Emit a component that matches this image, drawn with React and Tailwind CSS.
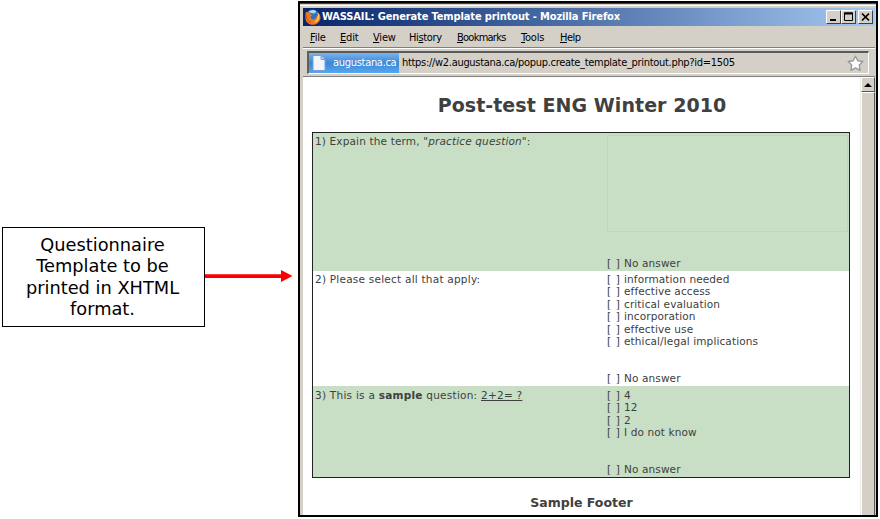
const menuItems = [
  { before: '', key: 'F', after: 'ile', style: 'w-[30px]' },
  { before: '', key: 'E', after: 'dit', style: 'w-[33px]' },
  { before: '', key: 'V', after: 'iew', style: 'w-[36px]' },
  { before: 'Hi', key: 's', after: 'tory', style: 'w-[48px] tracking-[-0.35px]' },
  { before: '', key: 'B', after: 'ookmarks', style: 'w-[64px] tracking-[-0.75px]' },
  { before: '', key: 'T', after: 'ools', style: 'w-[39px]' },
  { before: '', key: 'H', after: 'elp', style: 'w-[30px] tracking-[-0.5px]' },
];

const UI = "font-['DejaVu_Sans_Condensed','DejaVu_Sans',sans-serif] [font-stretch:condensed]";

function FirefoxIcon() {
  return (
    <svg width="16" height="16" viewBox="0 0 16 16" className="block shrink-0">
      <circle cx="7.500" cy="7" r="6.500" fill="#2f6fc4" />
      <path d="M3.500 3C5 .8 9 .3 11.500 2.200L9.500 4.500 6 4z" fill="#9fdcf8" />
      <path d="M1 2.500C1.800 3.400 2.500 3.600 3.200 3.300 4 2.900 5 3.200 5.500 3.800L5 5.200l2.500.9-2 1.600c0 2 1.700 3 3.500 2.600 1.700-.4 2.700-1.700 2.500-3.500l1.200.5c.4-1.500 0-3-.9-4.300 2.600 1.200 4 3.600 3.600 6.500-.6 3.600-3.800 6.300-7.500 6.300C3.500 15.800 .3 12.500.3 8.500c0-2.200.2-4.500.7-6z" fill="#ec7a1c" />
      <path d="M12.700 3.500c1.700 2 2 4.600 1 6.700-1.100 2.300-3.200 3.300-5.600 3.200 3.500-1.100 5.400-4.500 4.600-9.900z" fill="#ffd655" />
      <path d="M.9 5.500c.2 4 2 6.500 5.100 7.900" stroke="#c8451a" strokeWidth="1" fill="none" />
    </svg>
  );
}

function PageIcon() {
  return (
    <svg width="14" height="16" viewBox="0 0 14 16" className="block shrink-0">
      <path d="M1 .5h8l4 4v11H1z" fill="#f1f6fe" stroke="#7f9dcc" />
      <path d="M9 .5v4h4z" fill="#c9daf2" stroke="#7f9dcc" />
    </svg>
  );
}

function StarIcon() {
  return (
    <svg width="17" height="17" viewBox="0 0 17 17" className="block shrink-0">
      <path d="M8.500 1.200l2.300 4.500 5 .8-3.500 3.600.8 5.200-4.600-2.400-4.600 2.400.8-5.200L1.200 6.500l5-.8z" fill="#fff" stroke="#999" strokeWidth="1.400" strokeLinejoin="round" />
    </svg>
  );
}

function CaptionButton({ children, spaced }) {
  return (
    <div className={`flex h-[14px] w-[15px] shrink-0 items-center justify-center border border-t-white border-l-white border-r-[#404040] border-b-[#404040] bg-[#d4d0c8] ${spaced ? 'ml-[2px]' : ''}`}>
      <svg width="13" height="12" viewBox="0 0 13 12" className="block shrink-0">{children}</svg>
    </div>
  );
}

function TitleBar() {
  return (
    <div className="flex h-[18px] items-center bg-linear-to-r from-[#0a246a] to-[#a6caf0] pl-[2px] pr-[2px]">
      <FirefoxIcon />
      <span className={`ml-[1px] whitespace-nowrap text-[11px] leading-[16px] font-bold tracking-[-0.13px] text-white ${UI}`}>
        WASSAIL: Generate Template printout - Mozilla Firefox
      </span>
      <div className="ml-auto flex">
        <CaptionButton><path d="M3 8h6v2H3z" fill="#000" /></CaptionButton>
        <CaptionButton>
          <path d="M2.500 2h8v7.500h-8z" fill="none" stroke="#000" />
          <path d="M2 1.500h9v2H2z" fill="#000" />
        </CaptionButton>
        <CaptionButton spaced><path d="M3 2.500l7 7M10 2.500l-7 7" stroke="#000" strokeWidth="1.700" /></CaptionButton>
      </div>
    </div>
  );
}

function MenuBar() {
  return (
    <div className={`flex h-[22px] border-b border-[#808080] pl-[7px] text-[11px] leading-[23px] tracking-[-0.2px] text-black ${UI}`}>
      {menuItems.map((m) => (
        <div key={m.key} className={`shrink-0 whitespace-nowrap ${m.style}`}>
          {m.before}
          <span className="underline underline-offset-1">{m.key}</span>
          {m.after}
        </div>
      ))}
    </div>
  );
}

function AddressBar() {
  return (
    <div className="h-[29px] border-t border-b border-t-white border-b-[#808080] pt-[2px] pl-[4px] pr-[6px]">
      <div className={`flex h-[23px] items-center border-t-2 border-l-2 border-r border-b border-t-[#5a5a5a] border-l-[#606060] border-r-white border-b-white text-[11px] ${UI}`}>
        <div className="flex h-full w-[90px] items-center bg-linear-to-b from-[#77b5ef] via-[#3b87d7] to-[#55a8ee] pl-[3px] text-white">
          <PageIcon />
          <span className="ml-[7px] whitespace-nowrap tracking-[-0.3px]">augustana.ca</span>
        </div>
        <span className="ml-[3px] whitespace-nowrap tracking-[-0.305px] text-black">https://w2.augustana.ca/popup.create_template_printout.php?id=1505</span>
        <div className="mr-[4px] ml-auto"><StarIcon /></div>
      </div>
    </div>
  );
}

function Choice({ children }) {
  return (
    <div className="flex h-[12.4px] tracking-[0.12px] whitespace-nowrap">
      <span className="w-[17px] tracking-[0.700px]">[ ]</span>
      <span>{children}</span>
    </div>
  );
}

function Question({ prompt, choices, box, className }) {
  return (
    <div className={`flex ${className}`}>
      <div className="w-[292px] shrink-0 pl-[2px] whitespace-nowrap">{prompt}</div>
      <div className="flex flex-1 flex-col pb-[3px] pl-[2px]">
        {box && <div className="mt-[1px] h-[97px] w-[241px] border border-[#cbcccb]" />}
        {choices.map((c) => <Choice key={c}>{c}</Choice>)}
        <div className="mt-auto"><Choice>No answer</Choice></div>
      </div>
    </div>
  );
}

function Scrollbar() {
  return (
    <div className="flex w-[15px] shrink-0 flex-col border-l border-[#eeece8] bg-[#d4d0c8]">
      <div className="flex h-[15px] items-center justify-center border border-t-white border-l-white border-r-[#555] border-b-[#555]">
        <svg width="8" height="4" viewBox="0 0 8 4" className="block"><path d="M4 0l4 4H0z" fill="#000" /></svg>
      </div>
      <div className="flex-1 border-t border-r border-l border-t-white border-r-[#555] border-l-white" />
    </div>
  );
}

export default function App() {
  return (
    <div className="flex h-[519px] w-[880px] overflow-hidden bg-white pt-[1px] font-['DejaVu_Sans',sans-serif]">
      <div className="flex w-[298px] shrink-0 items-start pt-[226px] pl-[2px]">
        <div className="h-[100px] w-[203px] shrink-0 border border-black pt-[6px] pr-[2px] text-center text-[17.800px] leading-[21.300px] text-black">
          <div>Questionnaire</div>
          <div>Template to be</div>
          <div>printed in XHTML</div>
          <div>format.</div>
        </div>
        <svg width="88" height="14" viewBox="0 0 88 14" className="mt-[42px] block shrink-0">
          <path d="M0 5.200h76V1l11.500 6-11.500 6V9H0z" fill="#f00" />
        </svg>
      </div>

      <div className="flex h-[516px] w-[580px] shrink-0 flex-col border-2 border-black bg-[#d4d0c8]">
        <div className="h-[5px] shrink-0 border-t border-[#6b3030] pt-[1px]">
          <div className="h-[1px] bg-white" />
        </div>
        <div className="flex min-h-0 flex-1 flex-col pr-[1px] pl-[3px]">
          <TitleBar />
          <MenuBar />
          <AddressBar />
          <div className="flex min-h-0 flex-1 overflow-hidden">
            <div className="min-w-0 flex-1 bg-white pl-[9px] text-[#404040]">
              <h1 className="h-[55px] w-[538px] pt-[16px] pl-[2px] text-center text-[19px] leading-[24px] font-bold tracking-[0.06px] whitespace-nowrap">
                Post-test ENG Winter 2010
              </h1>
              <div className="h-[346px] w-[538px] border border-[#222] text-[10.500px] leading-[14px]">
                <Question
                  className="h-[138px] bg-[#c8dfc6] pt-[1px] tracking-[0.15px]"
                  box
                  prompt={<>1) Expain the term, "<i>practice question</i>":</>}
                  choices={[]}
                />
                <Question
                  className="h-[115px] pt-[1px] tracking-[0.23px]"
                  prompt="2) Please select all that apply:"
                  choices={['information needed', 'effective access', 'critical evaluation', 'incorporation', 'effective use', 'ethical/legal implications']}
                />
                <Question
                  className="h-[91px] bg-[#c8dfc6] pt-[2px] tracking-[0.25px]"
                  prompt={<>3) This is a <b>sample</b> question: <u>2+2= ?</u></>}
                  choices={['4', '12', '2', 'I do not know']}
                />
              </div>
              <div className="w-[538px] pt-[16px] pl-[1px] text-center text-[12.500px] leading-[18px] font-bold whitespace-nowrap">Sample Footer</div>
            </div>
            <Scrollbar />
          </div>
        </div>
      </div>
    </div>
  );
}
